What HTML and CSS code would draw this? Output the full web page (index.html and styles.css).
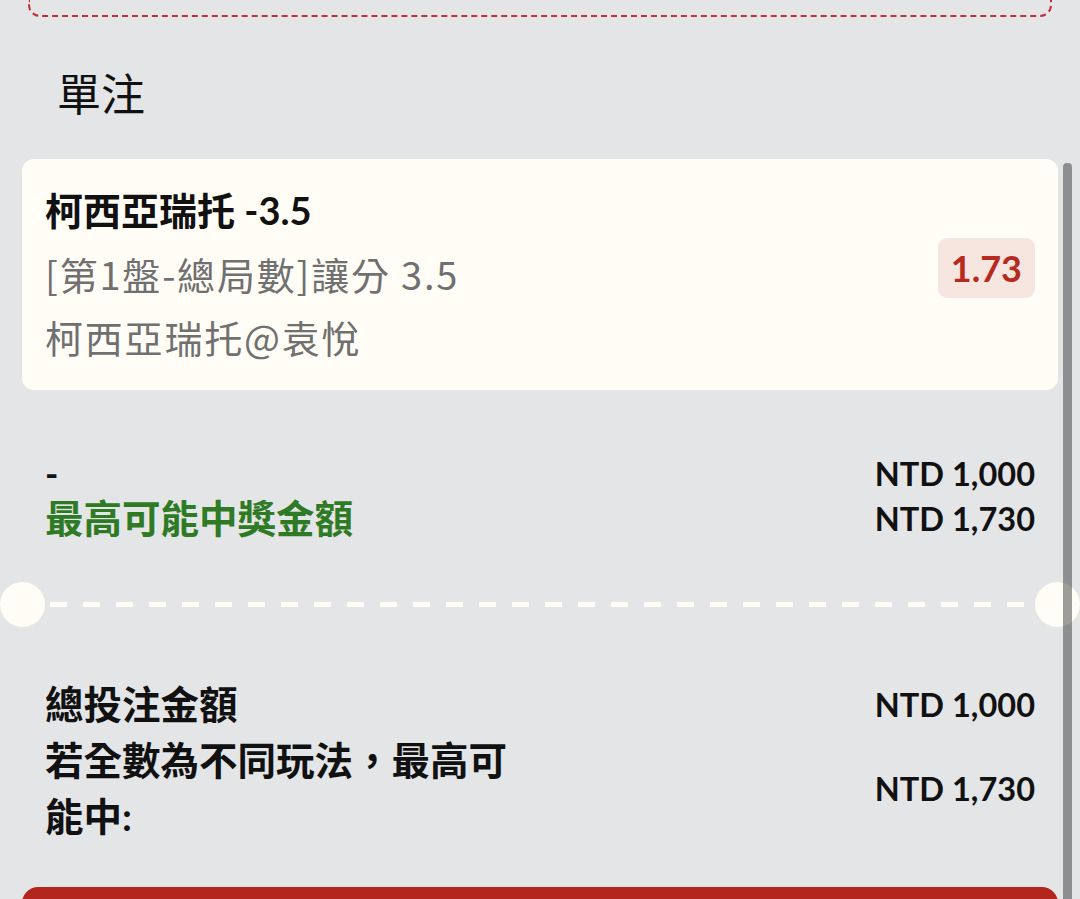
FILE: index.html
```html
<!DOCTYPE html>
<html lang="zh-Hant">
<head>
<meta charset="utf-8">
<title>單注</title>
<link rel="stylesheet" href="styles.css">
</head>
<body>
<div class="page">
  <div class="top-box"></div>
  <h1 class="title">單注</h1>
  <div class="bet-card">
    <div class="bet-info">
      <div class="bet-name">柯西亞瑞托 -3.5</div>
      <div class="bet-sub">[第1盤-總局數]讓分 3.5</div>
      <div class="bet-sub">柯西亞瑞托@袁悅</div>
    </div>
    <div class="odds">1.73</div>
  </div>
  <div class="summary">
    <div class="sum-row">
      <span class="dash-label">-</span>
      <span class="amount">NTD 1,000</span>
    </div>
    <div class="sum-row">
      <span class="win-label">最高可能中獎金額</span>
      <span class="amount">NTD 1,730</span>
    </div>
  </div>
  <div class="divider">
    <span class="notch"></span>
    <span class="dashes"></span>
    <span class="notch"></span>
  </div>
  <div class="totals">
    <div class="tot-row">
      <span class="tot-label">總投注金額</span>
      <span class="amount">NTD 1,000</span>
    </div>
    <div class="tot-row">
      <span class="tot-label">若全數為不同玩法，最高可能中:</span>
      <span class="amount">NTD 1,730</span>
    </div>
  </div>
  <div class="submit"></div>
  <div class="scrollbar"></div>
</div>
</body>
</html>
```

FILE: styles.css
```css
html, body {
  margin: 0;
  padding: 0;
  background: #e4e5e7;
  overflow: hidden;
}
body {
  font-family: Lato, "Noto Sans CJK TC", sans-serif;
  color: #111;
  height: 899px;
}
.page {
  position: relative;
  padding: 0 22px;
  height: 899px;
  box-sizing: border-box;
  overflow: hidden;
}
.top-box {
  margin: 0 6px;
  height: 15px;
  border: 2px dashed #c2313a;
  border-top: none;
  border-radius: 0 0 12px 12px;
}
.title {
  margin: 45px 0 0 35px;
  font-family: "Noto Sans CJK TC", sans-serif;
  font-weight: 400;
  font-size: 44px;
  line-height: 60px;
  color: #111;
}
.bet-card {
  margin-top: 37px;
  background: #fffdf6;
  border-radius: 12px;
  padding: 20px 23px 22px;
  display: flex;
  align-items: center;
  justify-content: space-between;
}
.bet-name {
  font-weight: 700;
  font-size: 38px;
  line-height: 63px;
  color: #111;
}
.bet-sub {
  font-family: "Noto Sans CJK TC", sans-serif;
  font-weight: 400;
  font-size: 38px;
  letter-spacing: 1.8px;
  line-height: 63px;
  color: #707070;
}
.odds {
  background: #f6e6df;
  color: #b52b22;
  font-weight: 700;
  font-size: 36px;
  line-height: 60px;
  padding: 0 13px;
  border-radius: 9px;
  margin-bottom: 12px;
}
.summary {
  padding: 61px 23px 0;
}
.sum-row {
  display: flex;
  justify-content: space-between;
  align-items: center;
  line-height: 45px;
}
.dash-label {
  font-weight: 700;
  font-size: 36px;
}
.win-label {
  font-weight: 700;
  font-size: 38.5px;
  color: #2f7b25;
}
.amount {
  font-weight: 700;
  font-size: 32.5px;
  color: #111;
}
.divider {
  margin: 41px -22px 0;
  height: 45px;
  display: flex;
  align-items: center;
  justify-content: space-between;
}
.notch {
  width: 45px;
  height: 45px;
  border-radius: 50%;
  background: #fffdf6;
  flex: none;
}
.dashes {
  flex: 1;
  height: 5px;
  margin: 0 5px 0 5px;
  background: repeating-linear-gradient(90deg, #fffdf6 0 17px, transparent 17px 33px);
}
.totals {
  padding: 49px 23px 0;
}
.tot-row {
  display: flex;
  justify-content: space-between;
  align-items: center;
}
.tot-label {
  font-weight: 700;
  font-size: 38.5px;
  line-height: 56px;
  max-width: 490px;
}
.submit {
  margin-top: 43px;
  height: 80px;
  background: #b3261e;
  border-radius: 16px;
}
.scrollbar {
  position: absolute;
  top: 163px;
  left: 1063px;
  width: 9px;
  height: 800px;
  background: rgba(0, 0, 0, 0.38);
  border-radius: 4px 4px 0 0;
}
```
